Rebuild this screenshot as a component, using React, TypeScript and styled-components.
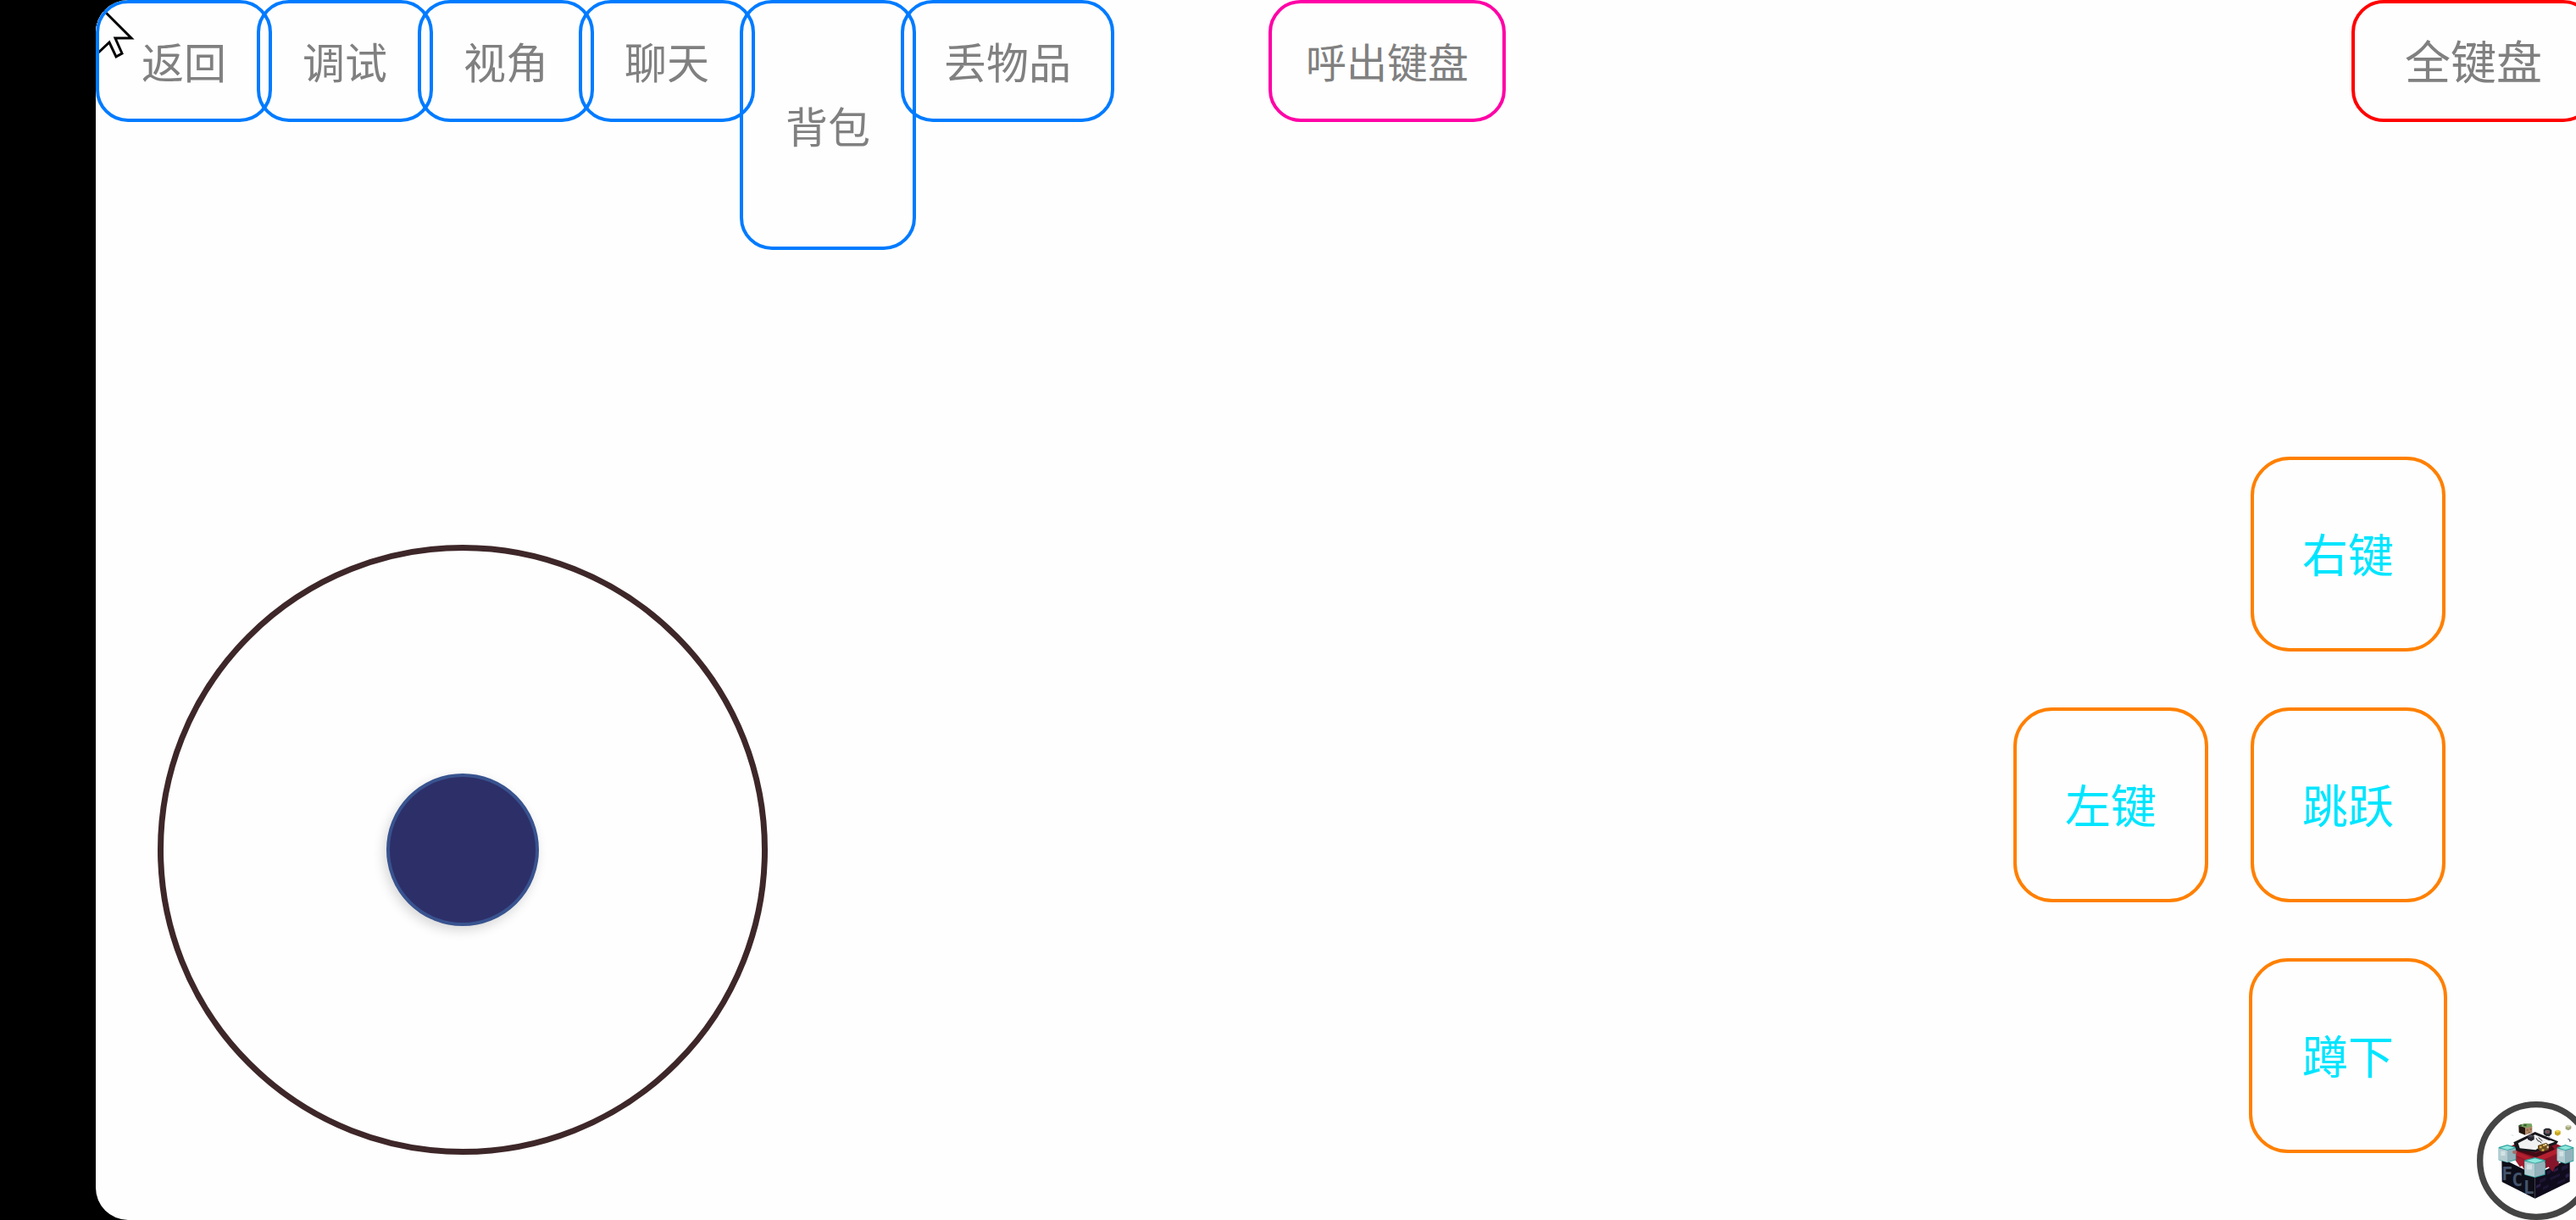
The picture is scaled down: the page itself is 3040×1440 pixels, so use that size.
import React from "react";
import styled, { createGlobalStyle } from "styled-components";

const GlobalStyle = createGlobalStyle`
  * { box-sizing: border-box; }
  body {
    margin: 0;
    background: #000;
    font-family: "Noto Sans CJK SC", "Noto Sans", sans-serif;
  }
`;

const Screen = styled.div`
  display: flex;
  min-height: 100vh;
  padding-left: 113px;
  background: #000;
  overflow: hidden;
`;

const Stage = styled.main`
  position: relative;
  display: flex;
  flex: 1;
  flex-direction: column;
  justify-content: space-between;
  min-width: 0;
  overflow: hidden;
  background: #fefefe;
  border-radius: 38px 0 0 38px;
`;

const TopBar = styled.header`
  position: relative;
  display: flex;
  align-items: flex-start;
`;

const Shortcuts = styled.nav`
  display: flex;
  align-items: flex-start;
  margin-right: 182px;

  > button + button {
    margin-left: -18px;
  }
`;

const Key = styled.button`
  flex: none;
  padding: 0 0 2px;
  background: transparent;
  border: 4px solid;
  font-family: inherit;
  font-weight: 400;
  line-height: 72px;
  white-space: nowrap;
  cursor: pointer;
`;

const BarKey = styled(Key)<{ $border: string; $width: number; $tall?: boolean; $size: number }>`
  width: ${(p) => p.$width}px;
  height: ${(p) => (p.$tall ? 295 : 144)}px;
  border-color: ${(p) => p.$border};
  border-radius: 38px;
  color: #808080;
  font-size: ${(p) => p.$size}px;
`;

const FullKeyboardKey = styled(BarKey)`
  margin-left: auto;
  margin-right: -23px;
`;

const Controls = styled.section`
  display: flex;
  align-items: flex-end;
  justify-content: space-between;
`;

const Joystick = styled.div`
  display: grid;
  place-items: center;
  width: 720px;
  height: 720px;
  margin: 0 0 77px 73px;
  border: 7px solid #3e2729;
  border-radius: 50%;
`;

const Knob = styled.button`
  width: 180px;
  height: 180px;
  padding: 0;
  background: #2d2f69;
  border: 4px solid #38538f;
  border-radius: 50%;
  box-shadow: -3px 5px 14px rgba(0, 0, 0, 0.16);
`;

const ActionPad = styled.div`
  display: grid;
  grid-template-columns: 230px 230px;
  gap: 66px 50px;
  margin: 0 154px 79px 0;
`;

const ActionKey = styled(Key)<{ $column: number; $wide?: boolean }>`
  grid-column: ${(p) => p.$column};
  justify-self: center;
  width: ${(p) => (p.$wide ? 234 : 230)}px;
  height: 230px;
  border-color: #ff8000;
  border-radius: 46px;
  color: #00e5ff;
  font-size: 54px;
`;

const Pointer = styled.svg`
  position: absolute;
  top: 0;
  left: 0;
  width: 50px;
  height: 72px;
`;

const MenuBall = styled.button`
  position: absolute;
  right: -23px;
  bottom: 0;
  width: 140px;
  height: 140px;
  padding: 0;
  background: transparent;
  border: 0;
  border-radius: 50%;

  svg {
    display: block;
    width: 100%;
    height: 100%;
  }
`;

const BLUE = "#007bff";

const shortcuts = [
  { label: "返回", width: 208 },
  { label: "调试", width: 208 },
  { label: "视角", width: 208 },
  { label: "聊天", width: 208 },
  { label: "背包", width: 208, tall: true },
  { label: "丢物品", width: 252 },
];

const actions = [
  { label: "右键", column: 2 },
  { label: "左键", column: 1 },
  { label: "跳跃", column: 2 },
  { label: "蹲下", column: 2, wide: true },
];

function PointerIcon() {
  return (
    <Pointer viewBox="0 0 50 72" aria-hidden="true">
      <path
        d="M0 3 L42 45 H23 L31 63 L24 67 L16 50 L0 65"
        fill="#fefefe"
        stroke="#000"
        strokeWidth="3"
      />
    </Pointer>
  );
}

function Corner({ x, y, w, h }: { x: number; y: number; w: number; h: number }) {
  const top = h * 0.28;
  return (
    <g transform={`translate(${x} ${y})`}>
      <path d={`M0 ${top / 2} L${w / 2} 0 L${w} ${top / 2} V${h - top / 2} L${w / 2} ${h} L0 ${h - top / 2}Z`} fill="#2ba39d" />
      <path d={`M6 ${top / 2 + 2} L${w / 2} 4 L${w - 6} ${top / 2 + 2} L${w / 2} ${top}Z`} fill="#8fe6dc" />
      <path d={`M0 ${top / 2 + 4} L${w / 2} ${top + 2} V${h - 2} L0 ${h - top / 2 - 2}Z`} fill="#b4ccd1" />
      <path d={`M${w / 2} ${top + 2} L${w - 2} ${top / 2 + 4} V${h - top / 2 - 3} L${w / 2} ${h - 2}Z`} fill="#93b2bb" />
      <path d={`M8 ${top + 5} h${w / 4} v${h / 4} h-${w / 4}z`} fill="#d3e2e4" />
    </g>
  );
}

function CrateLogo() {
  return (
    <svg viewBox="40 30 420 420" aria-hidden="true">
      <circle cx="250" cy="240" r="199" fill="#fefefe" stroke="#444" strokeWidth="22" />
      <path d="M128 232 L246 290 V374 L129 315Z" fill="#0c0d18" />
      <path d="M246 290 L369 232 V314 L246 374Z" fill="#100b1c" />
      <path d="M262 308 l22 -10 v12 l-22 10z M300 300 l34 -16 v10 l-34 16z M340 262 l22 -10 v14 l-22 10z M274 344 l20 -10 v-10 l-20 10z M326 324 l26 -12 v-9 l-26 12z M288 278 l14 -7 v12 l-14 7z" fill="#1d1533" />
      <path d="M250 328 l16 -8 v10 l-16 8z M312 272 l16 -8 v9 l-16 8z M354 290 l12 -6 v12 l-12 6z" fill="#2a1f48" />
      <path d="M124 206 L246 146 L374 204 L246 266Z" fill="#8d1526" />
      <path d="M176 224 L214 240 V282 L200 258 L192 262 L176 238Z" fill="#a01c2e" />
      <path d="M282 240 L330 220 V256 L318 262 L308 280 L294 262 L282 268Z" fill="#85152a" />
      <path d="M164 200 L240 232 L326 196 L340 208 L246 250 L154 212Z" fill="#b3202f" />
      <path d="M196 200 L250 212 L306 188 L316 200 L250 228 L184 206Z" fill="#420a14" />
      <g fill="#43536b" fontFamily="DejaVu Sans Mono" fontSize="64" fontWeight="700">
        <text x="128" y="309">F</text>
        <text x="164" y="331">C</text>
        <text x="204" y="357">L</text>
      </g>
      <Corner x={117} y={183} w={62} h={64} />
      <Corner x={324} y={183} w={59} h={68} />
      <Corner x={209} y={228} w={73} h={72} />
      <path d="M170 175 L246 138 L328 172 L322 181 L250 210 L180 204Z" fill="#17171b" />
      <path d="M186 178 L246 148 L302 171 L272 186 L248 202 L192 196Z" fill="#f1f1f2" />
      <path d="M250 160 l6 10 8 2 4 6 M258 158 l14 12" fill="none" stroke="#27272c" strokeWidth="3" />
      <path d="M276 174 L300 168 L316 173 L292 182Z" fill="#fff" />
      <path d="M220 152 l11 -5 12 6 v12 l-11 6 -12 -6z" fill="#25232c" />
      <path d="M220 152 l11 -5 12 6 -11 5z" fill="#47444f" />
      <path d="M188 117 L211 121 V149 L189 140Z" fill="#24170f" />
      <path d="M211 121 L236 117 V141 L211 149Z" fill="#b08b6c" />
      <path d="M188 115 L208 108 L234 109 L236 119 L211 124Z" fill="#76a260" />
      <path d="M188 115 l10 -4 v9 l-10 -2z M206 112 h10 v6 h-10z" fill="#315428" />
      <path d="M216 128 h6 v6 h-6z M228 125 h6 v6 h-6z M222 137 h6 v5 h-6z" fill="#8c6446" />
      <path d="M276 130 l8 -5 h12 l9 6 v14 l-8 8 h-12 l-9 -7z" fill="#26272a" />
      <path d="M283 131 h12 l4 6 -4 7 h-11 l-4 -6z" fill="#626568" />
      <path d="M287 138 l6 -5 v9z" fill="#b9252a" />
      <path d="M316 136 l10 -5 10 4 v11 l-10 6 -10 -5z" fill="#c8a51d" />
      <path d="M316 136 l10 -5 10 4 -10 6z" fill="#ecd34e" />
      <path d="M354 118 l9 -5 11 4 v10 l-10 6 -10 -5z" fill="#a3a77d" />
      <path d="M354 118 l9 -5 11 4 -10 5z" fill="#d2d5b2" />
      <path d="M256 186 L286 176 L296 186 L294 202 L268 208 L256 198Z" fill="#6d4f21" />
      <path d="M262 188 h8 v8 h-8z M274 182 h8 v7 h-8z M270 199 h8 v7 h-8z" fill="#d4ad4a" />
      <path d="M281 180 h6 v6 h-6z M288 188 h6 v8 h-6z" fill="#ead7b0" />
      <path d="M166 206 l10 -3 7 6 -8 8 -8 -3z" fill="#a36b68" />
      <path d="M158 148 l10 1 3 5 -5 -3z" fill="#c9c9cc" />
      <path d="M291 152 l9 4 2 6 -7 -3z" fill="#aaa9b4" />
      <path d="M362 163 l7 2 v7 l6 -4" fill="none" stroke="#4b4c68" strokeWidth="3" />
    </svg>
  );
}

export default function App() {
  return (
    <>
      <GlobalStyle />
      <Screen>
        <Stage>
          <PointerIcon />
          <TopBar>
            <Shortcuts>
              {shortcuts.map((s) => (
                <BarKey key={s.label} type="button" $border={BLUE} $width={s.width} $tall={s.tall} $size={50}>
                  {s.label}
                </BarKey>
              ))}
            </Shortcuts>
            <BarKey type="button" $border="#ff00a6" $width={280} $size={48}>
              呼出键盘
            </BarKey>
            <FullKeyboardKey type="button" $border="#ff0000" $width={288} $size={54}>
              全键盘
            </FullKeyboardKey>
          </TopBar>
          <Controls>
            <Joystick>
              <Knob type="button" aria-label="摇杆" />
            </Joystick>
            <ActionPad>
              {actions.map((a) => (
                <ActionKey key={a.label} type="button" $column={a.column} $wide={a.wide}>
                  {a.label}
                </ActionKey>
              ))}
            </ActionPad>
          </Controls>
          <MenuBall type="button" aria-label="菜单">
            <CrateLogo />
          </MenuBall>
        </Stage>
      </Screen>
    </>
  );
}
